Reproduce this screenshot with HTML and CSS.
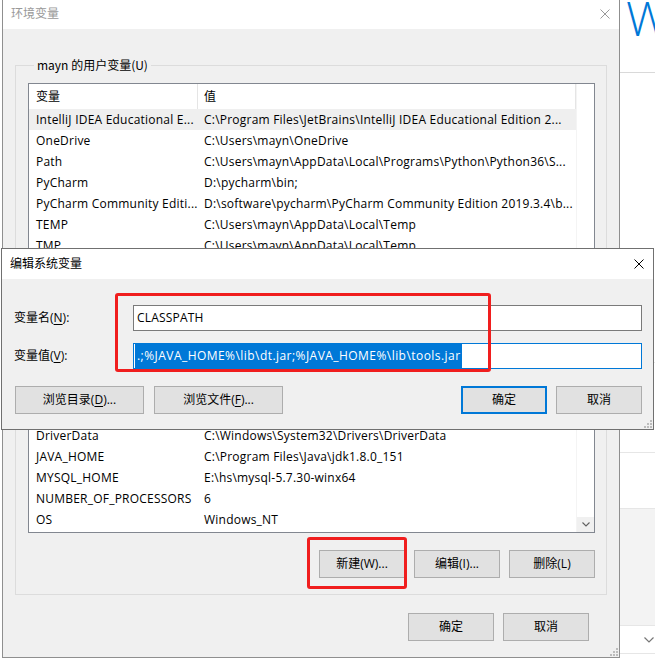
FILE: index.html
```html
<!DOCTYPE html>
<html lang="zh-CN">
<head>
<meta charset="utf-8">
<title>环境变量</title>
<link rel="stylesheet" href="styles.css">
</head>
<body>
<div class="desktop">
  <div class="bg-app">
    <div class="bg-head"><span class="bg-w">W</span></div>
    <div class="bg-sec bg-sec1"></div>
    <div class="bg-sec bg-sec2"></div>
    <div class="bg-sec bg-sec3"></div>
    <div class="bg-sec bg-gray"></div>
    <div class="bg-sec bg-drop">
      <svg class="bg-chev" width="10" height="6" viewBox="0 0 10 6"><polyline points="0.5,0.5 5,5 9.5,0.5" fill="none" stroke="#777" stroke-width="1.2"/></svg>
    </div>
  </div>

  <div class="win main-win">
    <div class="titlebar">
      <span class="title">环境变量</span>
      <svg class="close" width="10" height="10" viewBox="0 0 10 10"><path d="M0.5 0.5L9.5 9.5M9.5 0.5L0.5 9.5" stroke="#999" stroke-width="1" fill="none"/></svg>
    </div>
    <div class="win-body">
      <div class="group group-user">
        <span class="group-title">mayn 的用户变量(U)</span>
        <div class="listview list-user">
          <div class="lv-main">
            <div class="lv-head"><span class="c1">变量</span><span class="c2">值</span></div>
            <div class="lv-row sel"><span class="c1">IntelliJ IDEA Educational E...</span><span class="c2">C:\Program Files\JetBrains\IntelliJ IDEA Educational Edition 2...</span></div>
            <div class="lv-row"><span class="c1">OneDrive</span><span class="c2">C:\Users\mayn\OneDrive</span></div>
            <div class="lv-row"><span class="c1">Path</span><span class="c2">C:\Users\mayn\AppData\Local\Programs\Python\Python36\S...</span></div>
            <div class="lv-row"><span class="c1">PyCharm</span><span class="c2">D:\pycharm\bin;</span></div>
            <div class="lv-row"><span class="c1">PyCharm Community Editi...</span><span class="c2">D:\software\pycharm\PyCharm Community Edition 2019.3.4\b...</span></div>
            <div class="lv-row"><span class="c1">TEMP</span><span class="c2">C:\Users\mayn\AppData\Local\Temp</span></div>
            <div class="lv-row"><span class="c1">TMP</span><span class="c2">C:\Users\mayn\AppData\Local\Temp</span></div>
          </div>
          <div class="lv-scroll"></div>
        </div>
        <div class="btn-row">
          <button class="btn">新建(N)...</button>
          <button class="btn">编辑(E)...</button>
          <button class="btn">删除(D)</button>
        </div>
      </div>

      <div class="group group-sys">
        <span class="group-title">系统变量(S)</span>
        <div class="listview list-sys">
          <div class="lv-main">
            <div class="lv-head"><span class="c1">变量</span><span class="c2">值</span></div>
            <div class="lv-row"><span class="c1">ComSpec</span><span class="c2">C:\Windows\system32\cmd.exe</span></div>
            <div class="lv-row"><span class="c1">DriverData</span><span class="c2">C:\Windows\System32\Drivers\DriverData</span></div>
            <div class="lv-row"><span class="c1">JAVA_HOME</span><span class="c2">C:\Program Files\Java\jdk1.8.0_151</span></div>
            <div class="lv-row"><span class="c1">MYSQL_HOME</span><span class="c2">E:\hs\mysql-5.7.30-winx64</span></div>
            <div class="lv-row"><span class="c1">NUMBER_OF_PROCESSORS</span><span class="c2">6</span></div>
            <div class="lv-row"><span class="c1">OS</span><span class="c2">Windows_NT</span></div>
          </div>
          <div class="lv-scroll">
            <div class="sb-down">
              <svg width="8" height="5" viewBox="0 0 8 5"><polyline points="0.5,0.5 4,4 7.5,0.5" fill="none" stroke="#606060" stroke-width="1.1"/></svg>
            </div>
          </div>
        </div>
        <div class="btn-row">
          <button class="btn">新建(W)...</button>
          <button class="btn">编辑(I)...</button>
          <button class="btn">删除(L)</button>
        </div>
      </div>

      <div class="btn-row footer">
        <button class="btn">确定</button>
        <button class="btn">取消</button>
      </div>
    </div>
    <svg class="grip" width="8" height="8" viewBox="0 0 8 8"><g fill="#bcbcbc"><rect x="6" y="0" width="2" height="2"/><rect x="3" y="3" width="2" height="2"/><rect x="6" y="3" width="2" height="2"/><rect x="0" y="6" width="2" height="2"/><rect x="3" y="6" width="2" height="2"/><rect x="6" y="6" width="2" height="2"/></g></svg>
  </div>

  <div class="win dialog">
    <div class="titlebar">
      <span class="title">编辑系统变量</span>
      <svg class="close" width="10" height="10" viewBox="0 0 10 10"><path d="M0.5 0.5L9.5 9.5M9.5 0.5L0.5 9.5" stroke="#000" stroke-width="1" fill="none"/></svg>
    </div>
    <div class="dlg-body">
      <div class="field">
        <span class="field-label">变量名(<u>N</u>):</span>
        <div class="textbox">CLASSPATH</div>
      </div>
      <div class="field">
        <span class="field-label">变量值(<u>V</u>):</span>
        <div class="textbox focus"><span class="selection">.;%JAVA_HOME%\lib\dt.jar;%JAVA_HOME%\lib\tools.jar</span></div>
      </div>
      <div class="dlg-buttons">
        <div class="dlg-left">
          <button class="btn wide">浏览目录(<u>D</u>)...</button>
          <button class="btn wide">浏览文件(<u>F</u>)...</button>
        </div>
        <div class="dlg-right">
          <button class="btn default">确定</button>
          <button class="btn">取消</button>
        </div>
      </div>
    </div>
    <svg class="grip" width="8" height="8" viewBox="0 0 8 8"><g fill="#bcbcbc"><rect x="6" y="0" width="2" height="2"/><rect x="3" y="3" width="2" height="2"/><rect x="6" y="3" width="2" height="2"/><rect x="0" y="6" width="2" height="2"/><rect x="3" y="6" width="2" height="2"/><rect x="6" y="6" width="2" height="2"/></g></svg>
  </div>

  <div class="annot annot-dialog"></div>
  <div class="annot annot-new"></div>
</div>
</body>
</html>
```

FILE: styles.css
```css
* { box-sizing: border-box; }
html, body { margin: 0; padding: 0; }
body {
  width: 655px;
  height: 660px;
  overflow: hidden;
  background: #fff;
  color: #000;
  font-family: "Open Sans", "Noto Sans CJK SC", sans-serif;
  font-size: 12px;
  line-height: 16px;
}
u { text-decoration: underline; text-underline-offset: 2px; }

.desktop { position: relative; width: 655px; height: 660px; overflow: hidden; }

/* background app (right strip) */
.bg-app {
  position: absolute; left: 620px; top: 0; width: 200px; height: 660px;
  background: #fff; display: flex; flex-direction: column;
}
.bg-head { height: 73px; border-bottom: 1px solid #d9d9d9; padding-left: 6px; flex: none; }
.bg-w { font-size: 48px; line-height: 36px; color: #0078d7; font-weight: 300; }
.bg-sec { flex: none; }
.bg-sec1 { height: 290px; border-bottom: 1px solid #e6e6e6; }
.bg-sec2 { height: 90px; border-bottom: 1px solid #e6e6e6; }
.bg-sec3 { height: 55px; }
.bg-gray { height: 118px; background: #f3f3f3; border-top: 1px solid #e6e6e6; border-bottom: 1px solid #e6e6e6; }
.bg-drop { height: 28px; border-bottom: 1px solid #e6e6e6; display: flex; align-items: center; padding-left: 24px; }

/* windows */
.win { position: absolute; background: #f0f0f0; display: flex; flex-direction: column; }
.main-win { left: 2px; top: -2px; width: 618px; height: 660px; border: 1px solid #8f8f8f; }
.titlebar {
  flex: none; height: 30px; background: #fff;
  display: flex; align-items: center; justify-content: space-between;
  padding: 0 9px 0 8px;
}
.main-win .title { color: #999; }
.close { display: block; }

.win-body { flex: 1; padding: 36px 12px 0 12px; display: flex; flex-direction: column; }

.group { border: 1px solid #dcdcdc; padding: 0 11px 16px 12px; flex: none; }
.group-sys { margin-top: 11px; }
.group-title {
  display: block; width: max-content; height: 16px; line-height: 16px;
  margin: -9px 0 0 6px; padding: 0 3px; background: #f0f0f0;
  font-family: "Noto Sans CJK SC", sans-serif;
}

.listview {
  margin-top: 10px; background: #fff; border: 1px solid #828790;
  display: flex; overflow: hidden;
}
.list-user { height: 204px; }
.list-sys { height: 155px; }
.lv-main { flex: 1; overflow: hidden; }
.lv-scroll { width: 18px; flex: none; display: flex; flex-direction: column; justify-content: flex-end; border-left: 1px solid #f4f4f4; }
.sb-down { height: 15px; background: #f0f0f0; display: flex; align-items: center; justify-content: center; }
.sb-down svg { display: block; }

.lv-head, .lv-row { display: grid; grid-template-columns: 169px 1fr; white-space: nowrap; }
.lv-head { height: 25px; line-height: 25px; }
.lv-row { height: 21px; line-height: 21px; letter-spacing: 0.22px; }
.lv-head span { overflow: hidden; }
.c1 { padding-left: 7px; }
.c2 { padding-left: 6px; }
.lv-head .c1 { border-right: 1px solid #e5e5e5; }
.lv-head .c2 { border-right: 1px solid #e5e5e5; }
.lv-row.sel { background: #efefef; }

.btn-row { display: flex; justify-content: flex-end; gap: 9px; margin-top: 17px; }
.btn-row.footer { margin-top: 18px; padding-right: 18px; }

.btn {
  width: 86px; height: 28px; padding: 0;
  background: #e1e1e1; border: 1px solid #adadad; border-radius: 0;
  font: inherit; color: #000; line-height: 26px; text-align: center;
}
.btn.wide { width: 129px; }
.btn.default { border: 2px solid #0078d7; line-height: 24px; }

.grip { position: absolute; right: 1px; bottom: 1px; }

/* dialog */
.dialog { left: 1px; top: 248px; width: 653px; height: 182px; border: 1px solid #707070; }
.dlg-body { flex: 1; padding: 26px 11px 0 12px; display: flex; flex-direction: column; }
.field { display: flex; align-items: center; height: 26px; }
.field + .field { margin-top: 12px; }
.field-label { width: 119px; flex: none; }
.textbox {
  flex: 1; height: 26px; background: #fff; border: 1px solid #7a7a7a;
  padding: 0 3px; line-height: 24px; white-space: nowrap; overflow: hidden;
  letter-spacing: 0.2px;
}
.textbox.focus { border-color: #0078d7; padding: 0 1px; }
.selection {
  display: inline-block; height: 24px; line-height: 24px; vertical-align: top;
  background: #0078d7; color: #fff; padding: 0 1px 0 2px; letter-spacing: 0.45px;
}
.dlg-buttons { margin-top: 17px; display: flex; justify-content: space-between; }
.dlg-left { display: flex; gap: 10px; margin-left: 1px; }
.dlg-right { display: flex; gap: 9px; }

/* red annotation boxes */
.annot { position: absolute; border: 3px solid #f01e1e; border-radius: 3px; }
.annot-dialog { left: 115px; top: 293px; width: 376px; height: 79px; }
.annot-new { left: 307px; top: 537px; width: 100px; height: 52px; }
```
